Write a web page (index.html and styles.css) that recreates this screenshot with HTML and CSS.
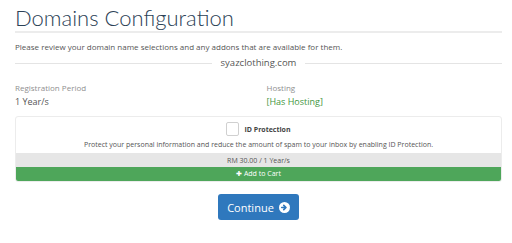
FILE: index.html
```html
<!DOCTYPE html>
<html lang="en">
<head>
  <meta charset="UTF-8" />
  <title>Domains Configuration</title>
  <link rel="stylesheet" href="styles.css">
</head>
<body>
  <div class="page">
    <h1 class="title">Domains Configuration</h1>
    <p class="intro">Please review your domain name selections and any addons that are available for them.</p>

    <div class="domain-name"><span>syazclothing.com</span></div>

    <div class="details">
      <div class="detail">
        <div class="label">Registration Period</div>
        <div class="value">1 Year/s</div>
      </div>
      <div class="detail">
        <div class="label">Hosting</div>
        <div class="value green">[Has Hosting]</div>
      </div>
    </div>

    <!-- addon panel -->
    <div class="addon">
      <div class="addon-body">
        <label class="addon-title"><span class="check"></span>ID Protection</label>
        <p class="addon-desc">Protect your personal information and reduce the amount of spam to your inbox by enabling ID Protection.</p>
      </div>
      <div class="addon-price">RM 30.00 / 1 Year/s</div>
      <div class="addon-cart">&#10010; Add to Cart</div>
    </div>

    <div class="actions">
      <button class="continue-btn">Continue
        <svg class="arrow" width="11" height="11" viewBox="0 0 12 12">
          <circle cx="6" cy="6" r="6" fill="#fff"/>
          <path d="M3 6h4.2M5.2 3.6L7.6 6 5.2 8.4" stroke="#2f78bd" stroke-width="1.8" fill="none" stroke-linecap="round" stroke-linejoin="round"/>
        </svg>
      </button>
    </div>
  </div>
</body>
</html>
```

FILE: styles.css
```css
:root {
  --text: #555;
  --muted: #8f8f8f;
  --line: #e4e4e4;
  --green: #4ea65a;
  --blue: #2f78bd;
}

html, body {
  margin: 0;
  padding: 0;
  background: #fff;
  font-family: 'Open Sans', sans-serif;
  color: var(--text);
}

.page {
  padding: 4px 10px 0 15px;
}

.title {
  margin: 0;
  font-family: 'Lato', sans-serif;
  font-weight: 300;
  font-size: 22px;
  line-height: 27px;
  color: #2b4156;
  border-bottom: 2px solid #ececec;
}

.intro {
  margin: 8px 0 0;
  font-size: 8px;
  line-height: 11px;
}

.domain-name {
  display: flex;
  align-items: center;
  gap: 9px;
  margin-top: 5px;
  font-size: 9.5px;
  line-height: 12px;
}

.domain-name::before,
.domain-name::after {
  content: "";
  flex: 1;
  border-top: 1px solid var(--line);
}

.details {
  display: grid;
  grid-template-columns: 1fr 1fr;
  margin-top: 13px;
}

.detail:nth-child(2) {
  padding-left: 8px;
}

.label {
  font-size: 8px;
  line-height: 11px;
  color: var(--muted);
}

.value {
  margin-top: 3px;
  font-size: 9px;
  line-height: 12px;
}

.value.green {
  color: #3f9640;
}

.addon {
  margin-top: 8px;
  border: 1px solid #ececec;
  border-radius: 3px;
  overflow: hidden;
  text-align: center;
  font-size: 7px;
}

.addon-body {
  padding: 5px 0 3px;
}

.addon-title {
  display: inline-flex;
  align-items: center;
  gap: 5px;
  font-weight: 700;
  color: #444;
}

.check {
  width: 11px;
  height: 12px;
  border: 1px solid #d0d0d0;
  border-radius: 2px;
  background: #fff;
}

.addon-desc {
  margin: 2px 0 0;
  line-height: 10px;
}

.addon-price {
  background: #e6e6e6;
  line-height: 13px;
  padding-top: 1px;
}

.addon-cart {
  background: var(--green);
  color: #fff;
  line-height: 14px;
}

.actions {
  display: flex;
  justify-content: center;
  padding-top: 12px;
}

.continue-btn {
  display: flex;
  align-items: center;
  gap: 5px;
  height: 26px;
  padding: 0 9px;
  border: none;
  border-radius: 3px;
  background: var(--blue);
  color: #fff;
  font-family: 'Open Sans', sans-serif;
  font-size: 11px;
  cursor: pointer;
}
```
